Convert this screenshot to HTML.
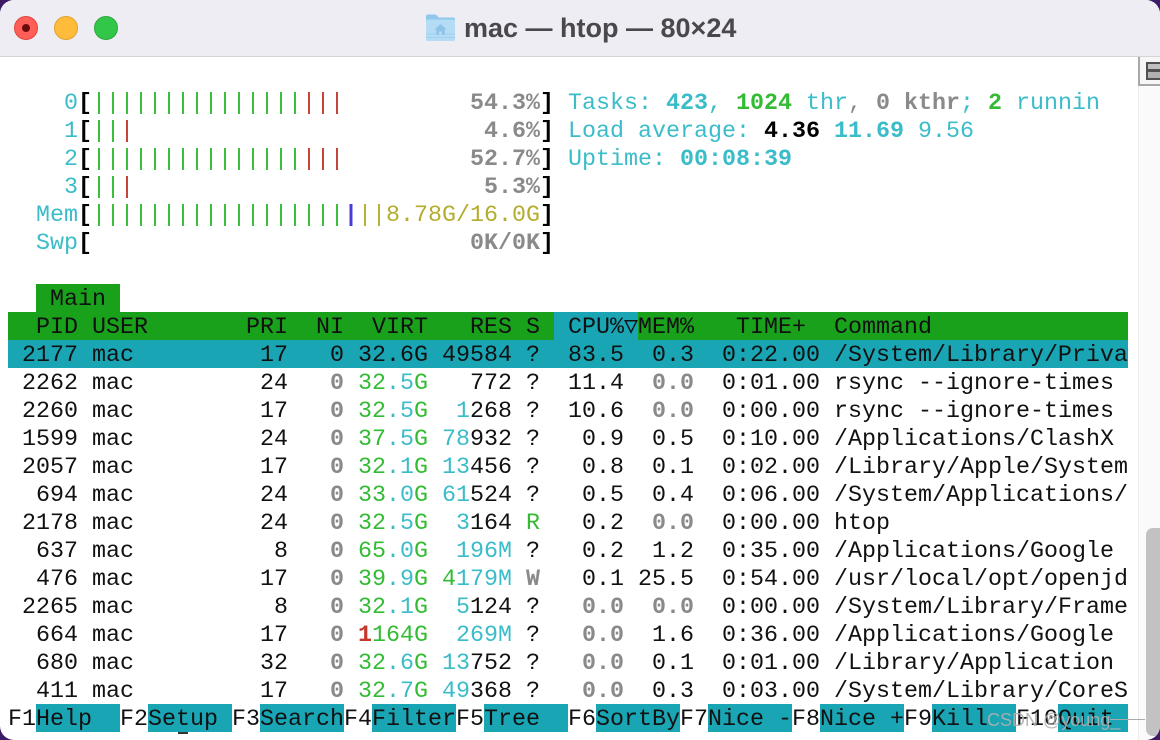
<!DOCTYPE html>
<html>
<head>
<meta charset="utf-8">
<style>
html,body{margin:0;padding:0;width:1160px;height:740px;overflow:hidden;background:#3c1a66;}
#win{position:absolute;left:0;top:0;width:1160px;height:740px;background:#fff;border-radius:14px;overflow:hidden;}
#bar{position:absolute;left:0;top:0;width:1160px;height:56px;background:#efedf4;border-bottom:1px solid #d5d4d8;}
.tl{position:absolute;top:16px;width:24px;height:24px;border-radius:50%;box-sizing:border-box;}
#title{position:absolute;left:464px;top:10px;font:bold 27px/36px "Liberation Sans",sans-serif;color:#4a484d;white-space:pre;}
.l{position:absolute;left:8px;height:28px;line-height:32px;width:1120px;font-family:"Liberation Mono",monospace;font-size:23.33px;color:#111;white-space:pre;}
.a{position:absolute;}
.c{color:#3abcc9}.g{color:#33bb33}.r{color:#c4392c}.y{color:#b3ad2d}.u{color:#4a3ad6}
.k{color:#8a8a8a;font-weight:bold}.kn{color:#8a8a8a}.kk{color:#000;font-weight:bold}
.cb{color:#3abcc9;font-weight:bold}.gb{color:#33bb33;font-weight:bold}.rb{color:#c4392c;font-weight:bold}
.t{position:absolute;top:704px;height:28px;background:#19a5b4}
</style>
</head>
<body>
<div id="win">
<div id="bar"></div>
<div class="tl" style="left:14px;background:#ff5f57;border:1px solid #e0443e"></div>
<div class="a" style="left:22px;top:24px;width:8px;height:8px;border-radius:50%;background:#6b0b0b"></div>
<div class="tl" style="left:54px;background:#ffbc3a;border:1px solid #dfa02c"></div>
<div class="tl" style="left:94px;background:#32c748;border:1px solid #28a83a"></div>
<svg class="a" style="left:425px;top:13px" width="31" height="29" viewBox="0 0 31 29">
<path d="M1 3.5Q1 1.5 3 1.5H10Q11.500 1.500 12.500 3L13.500 4.500H28Q30 4.500 30 6.500V26Q30 28 28 28H3Q1 28 1 26Z" fill="#8fc8ec"/>
<path d="M1 8Q1 6.500 3 6.500H28Q30 6.500 30 8V26Q30 28 28 28H3Q1 28 1 26Z" fill="#b4dcf5"/>
<path d="M1 21H30M1 24.500H30" stroke="#a2d1ef" stroke-width="1"/>
<path d="M15.500 11L9.500 16.500H11.300V22H14V18.500H17V22H19.700V16.500H21.500Z" fill="#8fc4e6"/>
</svg>
<div id="title">mac — htop — 80×24</div>

<div class="a" style="left:1138px;top:57px;width:22px;height:683px;background:#fafafa;border-left:1px solid #ececec;box-sizing:border-box"></div>
<div class="a" style="left:1138px;top:57px;width:22px;height:29px;background:#f6f6f6;border-left:2px solid #a8a8a8;border-bottom:2px solid #a8a8a8;box-sizing:border-box"></div>
<div class="a" style="left:1146px;top:62px;width:14px;height:18px;background:#505050"></div>
<div class="a" style="left:1148px;top:64px;width:12px;height:5px;background:#c0c0c0"></div>
<div class="a" style="left:1148px;top:72px;width:12px;height:6px;background:#b0b0b0"></div>
<div class="a" style="left:1146px;top:528px;width:14px;height:208px;background:#c2c2c2;border-radius:7px 0 0 7px"></div>

<div class="a" style="left:554px;top:312px;width:84px;height:28px;background:#19a5b4"></div>

<div class="l" style="top:88px">    <span class="c">0</span><span class="kk">[</span><span class="g">|||||||||||||||</span><span class="r">|||</span>         <span class="k">54.3%</span><span class="kk">]</span> <span class="c">Tasks: </span><span class="cb">423</span><span class="c">, </span><span class="gb">1024</span><span class="c"> thr</span><span class="kn">, </span><span class="k">0 kthr</span><span class="c">; </span><span class="gb">2</span><span class="c"> runnin</span></div>
<div class="l" style="top:116px">    <span class="c">1</span><span class="kk">[</span><span class="g">||</span><span class="r">|</span>                         <span class="k">4.6%</span><span class="kk">]</span> <span class="c">Load average: </span><span class="kk">4.36 </span><span class="cb">11.69 </span><span class="c">9.56</span></div>
<div class="l" style="top:144px">    <span class="c">2</span><span class="kk">[</span><span class="g">|||||||||||||||</span><span class="r">|||</span>         <span class="k">52.7%</span><span class="kk">]</span> <span class="c">Uptime: </span><span class="cb">00:08:39</span></div>
<div class="l" style="top:172px">    <span class="c">3</span><span class="kk">[</span><span class="g">||</span><span class="r">|</span>                         <span class="k">5.3%</span><span class="kk">]</span></div>
<div class="l" style="top:200px">  <span class="c">Mem</span><span class="kk">[</span><span class="g">||||||||||||||||||</span><span class="u" style="font-weight:bold">|</span><span class="y">||8.78G/16.0G</span><span class="kk">]</span></div>
<div class="l" style="top:228px">  <span class="c">Swp</span><span class="kk">[</span>                           <span class="k">0K/0K</span><span class="kk">]</span></div>

<div class="a" style="left:36px;top:284px;width:84px;height:28px;background:#1aa11c"></div>
<div class="l" style="top:284px">   Main</div>
<div class="a" style="left:8px;top:312px;width:546px;height:28px;background:#1aa11c"></div>
<div class="a" style="left:638px;top:312px;width:490px;height:28px;background:#1aa11c"></div>
<div class="l" style="top:312px">  PID USER       PRI  NI  VIRT   RES S  CPU%▽MEM%   TIME+  Command</div>
<div class="l" style="top:340px;background:#19a5b4"> 2177 mac         17   0 32.6G 49584 ?  83.5  0.3  0:22.00 /System/Library/Priva</div>
<div class="l" style="top:368px"> 2262 mac         24   <span class="k">0</span> <span class="g">32</span><span class="c">.5</span><span class="g">G</span>   772 ?  11.4  <span class="k">0.0</span>  0:01.00 rsync --ignore-times</div>
<div class="l" style="top:396px"> 2260 mac         17   <span class="k">0</span> <span class="g">32</span><span class="c">.5</span><span class="g">G</span>  <span class="c">1</span>268 ?  10.6  <span class="k">0.0</span>  0:00.00 rsync --ignore-times</div>
<div class="l" style="top:424px"> 1599 mac         24   <span class="k">0</span> <span class="g">37</span><span class="c">.5</span><span class="g">G</span> <span class="c">78</span>932 ?   0.9  0.5  0:10.00 /Applications/ClashX</div>
<div class="l" style="top:452px"> 2057 mac         17   <span class="k">0</span> <span class="g">32</span><span class="c">.1</span><span class="g">G</span> <span class="c">13</span>456 ?   0.8  0.1  0:02.00 /Library/Apple/System</div>
<div class="l" style="top:480px">  694 mac         24   <span class="k">0</span> <span class="g">33</span><span class="c">.0</span><span class="g">G</span> <span class="c">61</span>524 ?   0.5  0.4  0:06.00 /System/Applications/</div>
<div class="l" style="top:508px"> 2178 mac         24   <span class="k">0</span> <span class="g">32</span><span class="c">.5</span><span class="g">G</span>  <span class="c">3</span>164 <span class="g">R</span>   0.2  <span class="k">0.0</span>  0:00.00 htop</div>
<div class="l" style="top:536px">  637 mac          8   <span class="k">0</span> <span class="g">65</span><span class="c">.0</span><span class="g">G</span>  <span class="c">196M</span> ?   0.2  1.2  0:35.00 /Applications/Google</div>
<div class="l" style="top:564px">  476 mac         17   <span class="k">0</span> <span class="g">39</span><span class="c">.9</span><span class="g">G</span> <span class="g">4</span><span class="c">179M</span> <span class="k">W</span>   0.1 25.5  0:54.00 /usr/local/opt/openjd</div>
<div class="l" style="top:592px"> 2265 mac          8   <span class="k">0</span> <span class="g">32</span><span class="c">.1</span><span class="g">G</span>  <span class="c">5</span>124 ?   <span class="k">0.0</span>  <span class="k">0.0</span>  0:00.00 /System/Library/Frame</div>
<div class="l" style="top:620px">  664 mac         17   <span class="k">0</span> <span class="rb">1</span><span class="g">164G</span>  <span class="c">269M</span> ?   <span class="k">0.0</span>  1.6  0:36.00 /Applications/Google</div>
<div class="l" style="top:648px">  680 mac         32   <span class="k">0</span> <span class="g">32</span><span class="c">.6</span><span class="g">G</span> <span class="c">13</span>752 ?   <span class="k">0.0</span>  0.1  0:01.00 /Library/Application</div>
<div class="l" style="top:676px">  411 mac         17   <span class="k">0</span> <span class="g">32</span><span class="c">.7</span><span class="g">G</span> <span class="c">49</span>368 ?   <span class="k">0.0</span>  0.3  0:03.00 /System/Library/CoreS</div>

<div class="t" style="left:36px;width:84px"></div>
<div class="t" style="left:148px;width:84px"></div>
<div class="t" style="left:260px;width:84px"></div>
<div class="t" style="left:372px;width:84px"></div>
<div class="t" style="left:484px;width:84px"></div>
<div class="t" style="left:596px;width:84px"></div>
<div class="t" style="left:708px;width:84px"></div>
<div class="t" style="left:820px;width:84px"></div>
<div class="t" style="left:932px;width:84px"></div>
<div class="t" style="left:1058px;width:70px"></div>
<div class="l" style="top:704px">F1Help  F2Setup F3SearchF4FilterF5Tree  F6SortByF7Nice -F8Nice +F9Kill  F10Quit </div>

<div class="a" style="left:178px;top:732px;width:10px;height:2px;background:#333"></div>
<div class="a" style="left:987px;top:707px;font:18px/26px 'Liberation Sans',sans-serif;color:rgba(175,175,175,.9);white-space:pre">CSDN @young_</div>
<div class="a" style="left:1110px;top:719px;width:35px;height:1px;background:#aaa"></div>
</div>
</body>
</html>
